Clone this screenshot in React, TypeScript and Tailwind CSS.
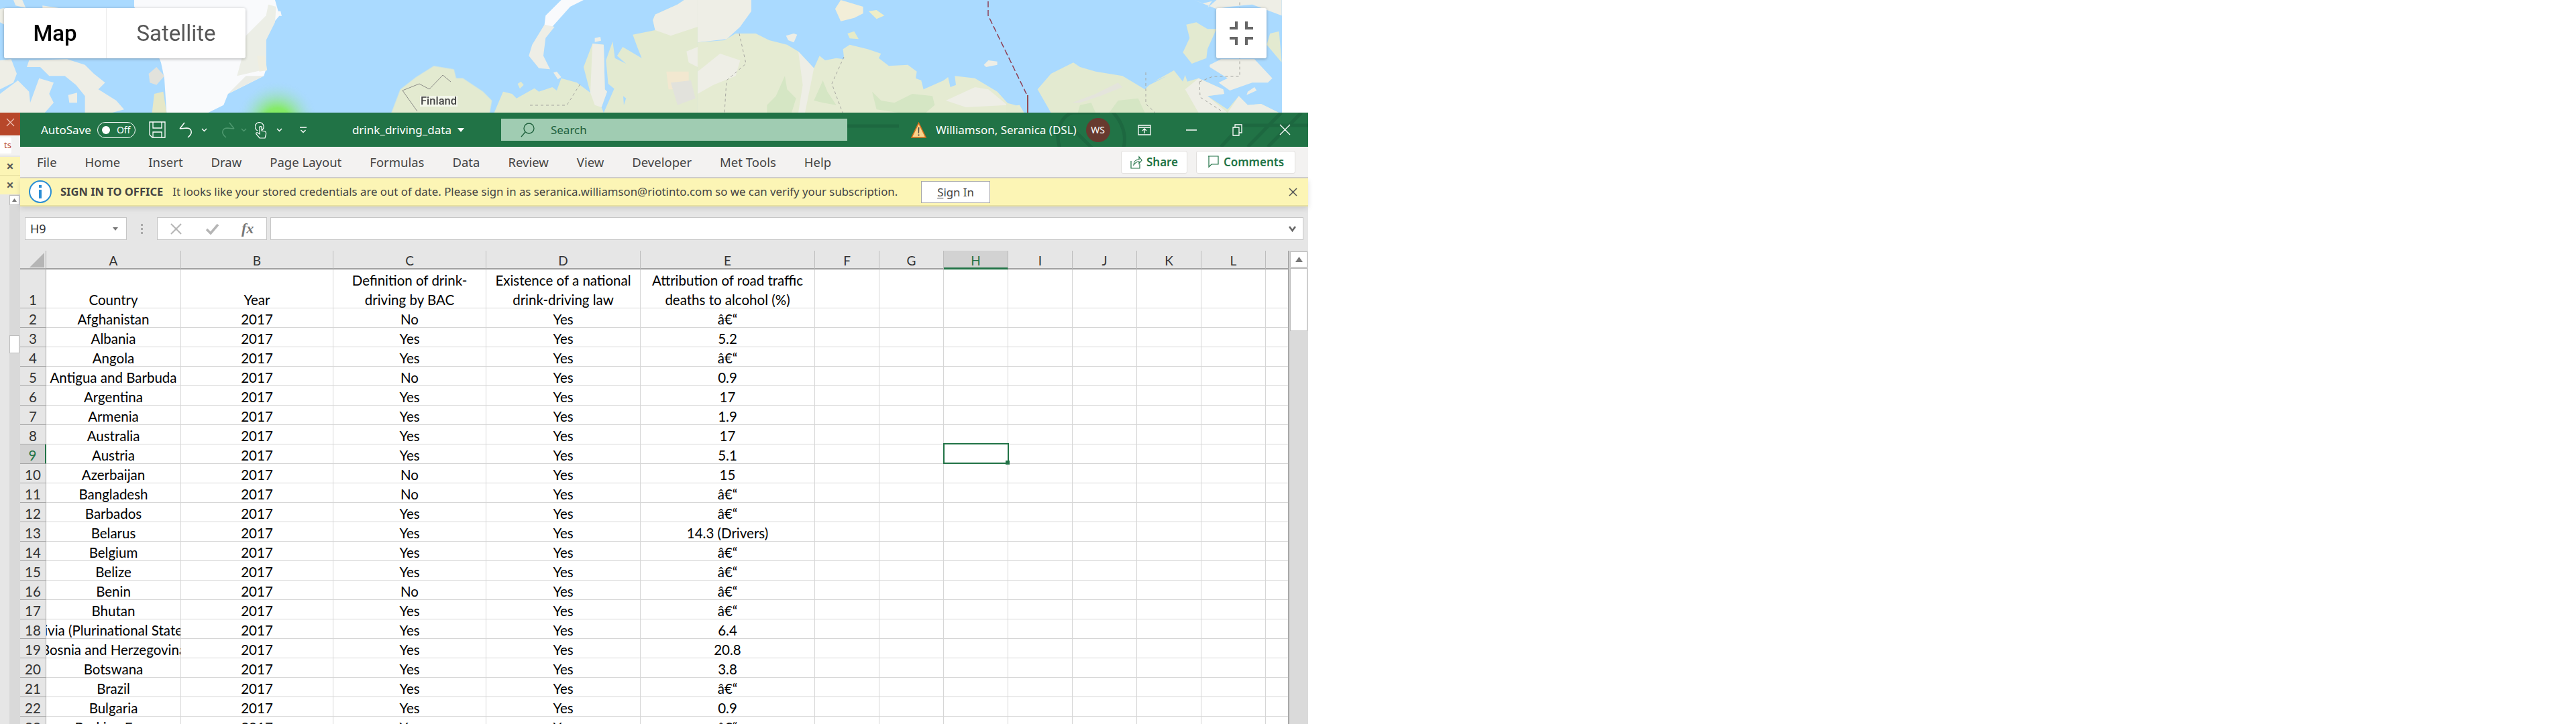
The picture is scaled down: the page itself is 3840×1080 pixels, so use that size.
import type { ReactNode } from "react";

const UI = "[font-family:'Noto_Sans',sans-serif]";
const CELL = "[font-family:Lato,sans-serif]";

const DASH = "â\u20ac\u201c";
const COLS = ["A", "B", "C", "D", "E", "F", "G", "H", "I", "J", "K", "L"];
const GRID = "grid grid-cols-[39px_201px_227px_228px_230px_260px_96px_96px_96px_96px_96px_96px_96px_34px]";

const ROWS: [string, string, string][] = [
  ["Afghanistan", "No", DASH],
  ["Albania", "Yes", "5.2"],
  ["Angola", "Yes", DASH],
  ["Antigua and Barbuda", "No", "0.9"],
  ["Argentina", "Yes", "17"],
  ["Armenia", "Yes", "1.9"],
  ["Australia", "Yes", "17"],
  ["Austria", "Yes", "5.1"],
  ["Azerbaijan", "No", "15"],
  ["Bangladesh", "No", DASH],
  ["Barbados", "Yes", DASH],
  ["Belarus", "Yes", "14.3 (Drivers)"],
  ["Belgium", "Yes", DASH],
  ["Belize", "Yes", DASH],
  ["Benin", "No", DASH],
  ["Bhutan", "Yes", DASH],
  ["Bolivia (Plurinational State of)", "Yes", "6.4"],
  ["Bosnia and Herzegovina", "Yes", "20.8"],
  ["Botswana", "Yes", "3.8"],
  ["Brazil", "Yes", DASH],
  ["Bulgaria", "Yes", "0.9"],
  ["Burkina Faso", "Yes", DASH],
];

const TABS = ["File", "Home", "Insert", "Draw", "Page Layout", "Formulas", "Data", "Review", "View", "Developer", "Met Tools", "Help"];

// map shapes, in the coordinates of 3x crops: [offset x, fill, points]
const LAND: [number, string, string][] = [
  [0, "#f9fafc", "600,0 1230,0 1250,70 1200,130 1190,180 1190,310 1180,340 1020,420 1000,470 930,505 745,505 735,350 720,280 640,90 600,30"],
  [0, "#eceee6", "1100,160 1190,70 1200,20 1235,30 1230,100 1190,180 1190,310 1060,340 1090,230"],
  [0, "#f0eee0", "1150,250 1185,250 1195,315 1160,320"],
  [0, "#eaece6", "1020,420 1100,380 1180,340 1100,340 1040,400"],
  [0, "#eeeee6", "0,270 50,265 75,330 60,370 0,400"],
  [0, "#eeeee6", "60,0 100,0 115,35 70,25"],
  [0, "#eeeee6", "0,40 20,35 20,110 0,100"],
  [0, "#eeeee6", "190,25 260,35 240,60 190,50"],
  [0, "#eeeee6", "130,270 300,265 380,290 420,330 470,370 440,400 520,450 555,490 500,505 380,505 380,430 340,380 290,340 220,340 180,300 120,300"],
  [0, "#eeeee6", "0,420 80,360 130,410 135,460 175,350 240,370 220,420 240,460 200,505 0,505"],
  [0, "#eeeee6", "305,425 345,415 345,460 310,460"],
  [0, "#e2e2dc", "665,330 700,300 735,340 700,380 670,370"],
  [0, "#e6e8c8", "690,420 730,410 745,505 680,505"],
  [0, "#f8f8f8", "1240,50 1255,50 1260,72 1240,70"],

  [520, "#e3ead0", "190,505 230,400 300,345 380,295 470,310 480,350 510,350 600,410 640,450 630,505"],
  [520, "#f9fafc", "1050,0 950,0 880,70 875,110 905,125 990,30"],
  [520, "#eeeee6", "875,110 820,200 805,250 850,305 900,310 870,250 880,170 920,120"],
  [520, "#eeeee6", "915,325 930,320 950,345 935,355"],
  [520, "#e3ead0", "755,375 770,365 782,380 765,397"],
  [520, "#eeeee6", "1100,170 1125,165 1128,182 1100,188"],
  [520, "#e3ead0", "650,505 690,410 730,420 750,440 830,395 850,410 910,390 930,405 950,350 1020,370 1080,415 1050,300 1090,195 1140,200 1145,400 1155,410 1130,480 1140,505"],
  [520, "#eeeee6", "1080,415 1090,195 1140,200 1145,400 1155,410 1130,480 1100,470"],
  [520, "#e3ead0", "1140,505 1190,390 1225,400 1230,470 1240,440 1160,375 1150,270 1180,185 1190,260 1240,285 1200,250 1225,210 1310,260 1290,210 1270,155 1370,135 1360,90 1370,65 1470,20 1500,0 1560,0 1560,505"],
  [520, "#eeeee6", "1370,135 1360,90 1370,65 1470,20 1500,0 1560,0 1560,120 1440,160"],
  [520, "#f2e8d0", "1420,320 1520,320 1520,400 1430,400"],
  [520, "#e2e2dc", "1440,370 1530,360 1550,440 1470,470"],
  [520, "#eeeee6", "1510,230 1560,210 1560,300 1520,280"],

  [1040, "#eeeee6", "0,0 240,0 240,50 190,120 130,175 0,190"],
  [1040, "#e5ebd2", "120,180 170,150 230,150 260,150 320,180 400,200 450,230 520,305 545,250 570,270 620,260 655,265 650,220 680,200 760,220 820,240 810,260 855,295 940,290 980,320 975,350 1000,360 1010,400 1100,360 1120,345 1130,390 1155,380 1150,340 1240,350 1340,410 1385,460 1395,475 1440,470 1460,505 0,505 0,190"],
  [1040, "#eeeee6", "0,320 100,240 190,270 170,340 70,380 0,420"],
  [1040, "#eeeee6", "450,230 520,305 480,505 450,505 470,380"],
  [1040, "#eeeee6", "1110,450 1240,390 1300,400 1385,470 1200,480"],
  [1040, "#f2eed8", "615,40 640,0 740,30 740,60 700,80 640,95"],
  [1040, "#eeeec8", "765,50 800,45 835,70 800,85"],
  [1040, "#e6ebc8", "670,150 700,140 720,175 680,172"],
  [1040, "#eeeee6", "395,160 430,150 445,155 430,190 405,180"],
  [1040, "#eeeee6", "1280,290 1300,270 1340,275 1340,290 1290,300"],
  [1040, "#d5e6c4", "390,340 400,400 440,440 420,505 310,505 310,470 350,430"],
  [1040, "#d5e6c4", "560,360 580,410 620,470 560,460 520,450"],
  [1040, "#d5e6c4", "780,410 820,450 880,460 960,420 1050,430 1060,470 1020,505 900,505 800,490"],

  [1500, "#e3ead0", "0,460 40,470 80,505 0,505"],
  [1500, "#e3ead0", "140,400 200,330 300,280 330,300 400,320 520,340 620,400 640,380 720,340 660,365 750,315 790,365 800,335 810,365 860,350 970,400 975,420 900,430 990,490 1040,430 1080,470 1140,465 1220,505 200,505"],
  [1500, "#eeeee6", "860,350 970,400 975,420 900,430 990,505 860,505 800,400"],
  [1500, "#eeeee6", "1040,430 1080,470 1140,465 1220,505 990,505"],
  [1500, "#e4e4dc", "295,460 400,420 500,370 520,390 420,430 330,460"],
  [1500, "#d5e6c4", "330,470 380,460 400,505 320,505"],
  [1500, "#d5e6c4", "500,450 590,440 620,505 460,505"],
  [1500, "#e3ead0", "805,110 850,100 900,130 940,130 900,220 895,260 830,285 790,235 820,170"],
  [1500, "#eeeee6", "910,290 960,265 1110,265 1190,350 1170,370 1100,370 1000,405 950,370 990,350 910,300"],
  [1500, "#eeeee6", "840,0 880,15 920,5 900,35 940,0 1232,0 1232,70 1100,20 1000,30 940,40"],
  [1500, "#e3ead0", "1180,150 1220,140 1232,280 1165,200"],
  [1500, "#eeeee6", "1080,410 1110,390 1120,405 1075,425"],
];

function MapBackground() {
  return (
    <svg width="1911" height="168" viewBox="0 0 1911 168" className="absolute inset-0">
      <defs>
        <radialGradient id="glow">
          <stop offset="0%" stopColor="#7df04f" />
          <stop offset="35%" stopColor="#86ea6a" />
          <stop offset="100%" stopColor="#a9dbf0" stopOpacity="0" />
        </radialGradient>
        <filter id="soft">
          <feGaussianBlur stdDeviation="0.5" />
        </filter>
      </defs>
      <rect width="1911" height="168" fill="#aadaff" />
      <g filter="url(#soft)">
        {LAND.map(([x, fill, pts], i) => (
          <polygon key={i} transform={`translate(${x} 0) scale(0.3333)`} points={pts} fill={fill} />
        ))}
      </g>
      <polyline points="1473,2 1473,23 1530,140" fill="none" stroke="#8f3f55" strokeWidth="1.5" strokeDasharray="9 4" />
      <line x1="1532" y1="142" x2="1532" y2="168" stroke="#8f1a1a" strokeWidth="1.5" />
      <g fill="none" stroke="#a5a5a0" strokeWidth="1" strokeDasharray="4 4">
        <polyline points="1102,50 1112,95 1083,120 1080,168" />
        <polyline points="1708,108 1708,155 1722,168" />
        <polyline points="1788,122 1808,114 1848,114 1848,0" />
        <polyline points="1788,122 1789,145 1820,165" />
        <polyline points="1258,85 1240,125 1256,168" />
        <polyline points="790,157 845,157 865,125" />
      </g>
      <polyline
        points="622,166 600,135 625,125 640,133 660,112 672,122"
        fill="none"
        stroke="#8a8a86"
        strokeWidth="1"
      />
      <circle cx="413" cy="182" r="60" fill="url(#glow)" />
    </svg>
  );
}

function MapControls() {
  return (
    <div className="relative flex h-[168px] w-[1911px] items-start justify-between overflow-hidden pt-3 pr-[23px] pl-[6px]">
      <MapBackground />
      <div className="relative flex h-[75px] rounded-[3px] bg-white text-[33px] shadow-[0_1px_4px_rgba(0,0,0,0.3)] [font-family:Roboto,sans-serif]">
        <div className="flex w-[152px] items-center justify-center font-medium text-black">Map</div>
        <div className="flex w-[208px] items-center justify-center border-l border-[#ececec] text-[#565656]">Satellite</div>
      </div>
      <span className="absolute top-[143px] left-[626px] bg-white/60 px-px text-[16.5px] leading-[16px] font-medium text-[#444] [font-family:Roboto,sans-serif]">
        Finland
      </span>
      <button className="relative flex h-[75px] w-[75px] items-center justify-center rounded-[3px] bg-white shadow-[0_1px_4px_rgba(0,0,0,0.3)]">
        <svg width="35" height="35" viewBox="0 0 35 35" fill="none" stroke="#666" strokeWidth="4">
          <path d="M0 10h10V0M25 0v10h10M35 25H25v10M10 35V25H0" />
        </svg>
      </button>
    </div>
  );
}

function Chevron({ dim }: { dim?: boolean }) {
  return (
    <svg width="9" height="6" viewBox="0 0 9 6" fill="none" stroke={dim ? "#4f9a70" : "#fff"} strokeWidth="1.4">
      <path d="M1 1l3.5 3.5L8 1" />
    </svg>
  );
}

function QuickAccess() {
  return (
    <div className="flex items-center">
      <svg width="25" height="25" viewBox="0 0 25 25" fill="none" stroke="#fff" strokeWidth="1.3" className="ml-5">
        <path d="M1 1h23v23H5l-4-4zM6 1v9h13V1M6 24v-8h13v8" />
      </svg>
      <svg width="24" height="25" viewBox="0 0 24 25" fill="none" stroke="#fff" strokeWidth="1.5" className="ml-5">
        <path d="M1 11L8 2M1 11l10-1c7 0 11 7 2 14" />
      </svg>
      <div className="mr-[17px] ml-[9px]"><Chevron /></div>
      <svg width="24" height="25" viewBox="0 0 24 25" fill="none" stroke="#4f9a70" strokeWidth="1.5">
        <path d="M23 11L16 2M23 11l-10-1C6 10 2 17 11 24" />
      </svg>
      <div className="mr-3 ml-[9px]"><Chevron dim /></div>
      <svg width="18" height="26" viewBox="0 0 18 26" fill="none" stroke="#fff" strokeWidth="1.2">
        <path d="M4 14a6.5 6.5 0 1 1 7-1M6 9a3 3 0 0 1 5 0M7 19V9c0-2 3-2 3 0v5l5 1c2 1 2 3 1 6l-1 4H7l-5-6c-1-2 1-3 2-2z" />
      </svg>
      <div className="ml-[14px]"><Chevron /></div>
      <svg width="10" height="10" viewBox="0 0 10 10" fill="none" stroke="#fff" strokeWidth="1.3" className="ml-[26px]">
        <path d="M0 1h10M1.5 5l3.5 3.5L8.5 5" />
      </svg>
    </div>
  );
}

function TitleBar() {
  return (
    <div className={`relative flex h-[51px] items-center overflow-hidden bg-[#217346] pl-[31px] text-white ${UI}`}>
      <svg width="700" height="51" viewBox="0 0 700 51" fill="none" stroke="#1d6840" strokeWidth="5" className="absolute top-0 right-0">
        <path d="M0 20h90M340 75c-30-50 0-75 10-75M405-5c30 30 30 70-10 90M350 0l40 0M345 20l50 50" />
        <path d="M570 51l30-32h100M640 51l50-51M610 51l50-51" />
      </svg>
      <span className="relative text-[17px]">AutoSave</span>
      <div className="relative ml-[9px] flex h-6 w-[57px] items-center rounded-full border-[1.5px] border-white pl-[6px]">
        <span className="h-3 w-3 rounded-full bg-white" />
        <span className="ml-[10px] text-[14px]">Off</span>
      </div>
      <QuickAccess />
      <span className="relative ml-[68px] text-[17px]">drink_driving_data</span>
      <svg width="10" height="6" viewBox="0 0 10 6" className="relative ml-[9px]">
        <path d="M0 0h10L5 6z" fill="#fff" />
      </svg>
      <div className="relative ml-[55px] flex h-[33px] w-[516px] items-center bg-[#a0ccb2] pl-[29px] text-[#1d5f3b]">
        <svg width="21" height="22" viewBox="0 0 21 22" fill="none" stroke="#1d5f3b" strokeWidth="1.3">
          <circle cx="12.5" cy="8.5" r="7.5" />
          <path d="M7 14L1 21" />
        </svg>
        <span className="ml-6 text-[17px]">Search</span>
      </div>
      <svg width="23" height="24" viewBox="0 0 23 24" className="relative ml-[95px]">
        <path d="M11.5 1.5L22 23H1z" fill="#fbd38a" stroke="#d9701e" strokeWidth="1.6" />
        <path d="M10.6 8h1.8l-.3 9h-1.2zM10.6 18.5h1.8v2h-1.8z" fill="#444" />
      </svg>
      <span className="relative ml-[14px] text-[17px] whitespace-nowrap">Williamson, Seranica (DSL)</span>
      <div className="relative ml-[14px] flex h-9 w-9 items-center justify-center rounded-full bg-[#673a2f] text-[14px]">WS</div>
      <svg width="20" height="16" viewBox="0 0 20 16" fill="none" stroke="#fff" strokeWidth="1.3" className="relative ml-[41px]">
        <path d="M1 1h18v14H1zM1 4h18M10 13V6M7 9l3-3 3 3" />
      </svg>
      <svg width="16" height="2" viewBox="0 0 16 2" className="relative ml-[52px]">
        <path d="M0 1h16" stroke="#fff" strokeWidth="1.5" />
      </svg>
      <svg width="15" height="18" viewBox="0 0 15 18" fill="none" stroke="#fff" strokeWidth="1.3" className="relative ml-[53px]">
        <path d="M1 5h9v12H1zM4 5V1h10v12h-4" />
      </svg>
      <svg width="17" height="17" viewBox="0 0 17 17" fill="none" stroke="#fff" strokeWidth="1.4" className="relative ml-[55px]">
        <path d="M1 1l15 15M16 1L1 16" />
      </svg>
    </div>
  );
}

function RibbonTabs() {
  return (
    <div className={`flex h-[47px] items-center justify-between border-b-2 border-[#d2d0ce] bg-[#f3f2f1] pr-[19px] pl-[4px] text-[#444] ${UI}`}>
      <div className="flex text-[18.5px]">
        {TABS.map((tab) => (
          <span key={tab} className="px-[21px] whitespace-nowrap">{tab}</span>
        ))}
      </div>
      <div className="flex gap-[13px] text-[17px] font-semibold text-[#217346]">
        <button className="flex h-[34px] w-[99px] items-center justify-center gap-[6px] rounded-[3px] border border-[#e1dfdd] bg-white">
          <svg width="18" height="20" viewBox="0 0 18 20" fill="none" stroke="#217346" strokeWidth="1.2">
            <path d="M1 8v11h13v-6M5 14c0-5 3-8 8-8V2l4 5-4 5V9c-4 0-6 2-8 5z" />
          </svg>
          Share
        </button>
        <button className="flex h-[34px] w-[148px] items-center justify-center gap-[7px] rounded-[3px] border border-[#e1dfdd] bg-white">
          <svg width="17" height="19" viewBox="0 0 17 19" fill="none" stroke="#217346" strokeWidth="1.2">
            <path d="M1 1h15v12H6l-4 4V1" />
          </svg>
          Comments
        </button>
      </div>
    </div>
  );
}

function SignInBar() {
  return (
    <div className={`relative flex h-[42px] items-center border-b-2 border-[#e6dfa0] bg-[#fcf5b5] pl-[13px] text-[16.8px] text-[#444] shadow-[0_3px_8px_rgba(0,0,0,0.12)] ${UI}`}>
      <div className="flex h-[34px] w-[34px] items-center justify-center rounded-full border-2 border-[#2a8dd4] bg-white">
        <svg width="6" height="20" viewBox="0 0 6 20">
          <path d="M1 0h4v4H1zM1 7h4v13H1z" fill="#2a8dd4" />
        </svg>
      </div>
      <span className="ml-[13px] text-[16.5px] font-bold whitespace-nowrap">SIGN IN TO OFFICE</span>
      <span className="ml-[14px] whitespace-nowrap">
        It looks like your stored credentials are out of date. Please sign in as seranica.williamson@riotinto.com so we can verify your subscription.
      </span>
      <button className="absolute top-1 left-[1343px] h-[33px] w-[103px] border border-[#a8a8a8] bg-white">
        <span className="underline decoration-1 underline-offset-2">S</span>ign In
      </button>
      <svg width="13" height="13" viewBox="0 0 13 13" fill="none" stroke="#555" strokeWidth="1.6" className="absolute top-[14px] left-[1891px]">
        <path d="M1 1l11 11M12 1L1 12" />
      </svg>
    </div>
  );
}

function FormulaBar() {
  return (
    <div className={`flex h-[66px] items-start gap-[5px] bg-[#e6e6e6] pt-4 pr-[7px] pl-[7px] ${UI}`}>
      <div className="flex h-[34px] w-[152px] items-center justify-between border border-[#c6c6c6] bg-white pr-3 pl-[7px] text-[18px] text-[#333]">
        H9
        <svg width="8" height="5" viewBox="0 0 8 5"><path d="M0 0h8L4 5z" fill="#777" /></svg>
      </div>
      <div className="flex h-[34px] w-[35px] flex-col items-center justify-center gap-[3px]">
        <span className="h-[3px] w-[3px] bg-[#aaa]" />
        <span className="h-[3px] w-[3px] bg-[#aaa]" />
        <span className="h-[3px] w-[3px] bg-[#aaa]" />
      </div>
      <div className="flex h-[34px] w-[164px] items-center border border-[#c6c6c6] bg-white pl-[19px]">
        <svg width="17" height="17" viewBox="0 0 17 17" fill="none" stroke="#b5b5b5" strokeWidth="2">
          <path d="M1 1l15 15M16 1L1 16" />
        </svg>
        <svg width="20" height="17" viewBox="0 0 20 17" fill="none" stroke="#b5b5b5" strokeWidth="3.5" className="ml-[36px]">
          <path d="M1 9l6 6L18 2" />
        </svg>
        <span className="ml-[33px] text-[22px] leading-none font-bold text-[#777] italic [font-family:'Liberation_Serif',serif]">fx</span>
      </div>
      <div className="flex h-[34px] flex-1 items-center justify-end border border-[#c6c6c6] bg-white pr-[10px]">
        <svg width="11" height="11" viewBox="0 0 11 11" fill="none" stroke="#666" strokeWidth="2.6">
          <path d="M1 2l4.5 6L10 2" />
        </svg>
      </div>
    </div>
  );
}

function Cell({ children }: { children?: ReactNode }) {
  return (
    <div className="flex items-center justify-center overflow-hidden border-r border-b border-[#d6d6d6] pt-[4px] leading-[24px] whitespace-nowrap">
      {children}
    </div>
  );
}

function HeadCell({ children }: { children: ReactNode }) {
  return (
    <div className="flex items-end justify-center border-r border-b border-[#d6d6d6]">
      <div className="-mb-[3px]">{children}</div>
    </div>
  );
}

function Sheet() {
  return (
    <div className="relative h-[706px] overflow-hidden bg-white">
      <div className={`flex flex-col ${CELL} text-[20.5px] text-black`}>
        <div className={`${GRID} grid-rows-[28px] bg-[#e6e6e6] text-[19px] leading-[22px] text-[#333]`}>
          <div className="relative border-r border-b-2 border-[#a8a8a8]">
            <svg width="22" height="22" viewBox="0 0 22 22" className="absolute right-[2px] bottom-[1px]">
              <path d="M22 0v22H0z" fill="#b5b5b5" />
            </svg>
          </div>
          {COLS.map((c) => (
            <div
              key={c}
              className={
                c === "H"
                  ? "flex items-center justify-center border-r border-b-[3px] border-r-[#b5b5b5] border-b-[#217346] bg-[#d2d2d2] pt-[4px] text-[#217346]"
                  : "flex items-center justify-center border-r border-b-2 border-r-[#bdbdbd] border-b-[#a0a0a0] pt-[4px]"
              }
            >
              {c}
            </div>
          ))}
          <div className="border-b-2 border-[#a0a0a0]" />
        </div>

        <div className={`${GRID} grid-rows-[58px] text-center leading-[29px]`}>
          <div className="flex items-end justify-center border-r border-b border-[#a8a8a8] bg-[#e6e6e6] text-[#333]">
            <div className="-mb-[3px]">1</div>
          </div>
          <HeadCell>Country</HeadCell>
          <HeadCell>Year</HeadCell>
          <HeadCell>Definition of drink-<br />driving by BAC</HeadCell>
          <HeadCell>Existence of a national<br />drink-driving law</HeadCell>
          <HeadCell>Attribution of road traffic<br />deaths to alcohol (%)</HeadCell>
          {Array.from({ length: 8 }).map((_, i) => (
            <div key={i} className="border-r border-b border-[#d6d6d6]" />
          ))}
        </div>

        {ROWS.map(([country, bac, pct], i) => {
          const row = i + 2;
          return (
            <div key={country} className={`${GRID} grid-rows-[29px]`}>
              <div
                className={
                  row === 9
                    ? "flex items-center justify-center border-r-2 border-b border-r-[#217346] border-b-[#a8a8a8] bg-[#d2d2d2] pt-[4px] leading-[24px] text-[#217346]"
                    : "flex items-center justify-center border-r border-b border-[#a8a8a8] bg-[#e6e6e6] pt-[4px] leading-[24px] text-[#333]"
                }
              >
                {row}
              </div>
              <Cell>{country}</Cell>
              <Cell>2017</Cell>
              <Cell>{bac}</Cell>
              <Cell>Yes</Cell>
              <Cell>{pct}</Cell>
              {COLS.slice(5).map((c) => (
                <div key={c} className="relative border-r border-b border-[#d6d6d6]">
                  {c === "H" && row === 9 && (
                    <span className="absolute top-[-2px] right-[-2px] bottom-[-1px] left-[-1px] z-10 border-2 border-[#217346]">
                      <span className="absolute right-[-3px] bottom-[-3px] h-[6px] w-[6px] bg-[#217346]" />
                    </span>
                  )}
                </div>
              ))}
              <div className="border-b border-[#d6d6d6]" />
            </div>
          );
        })}
      </div>
      <div className="absolute top-0 right-0 flex h-full w-[30px] flex-col items-center border-l-2 border-[#a8a8a8] bg-[#dadada]">
        <button className="mt-px flex h-6 w-[26px] items-center justify-center border border-[#bdbdbd] bg-white">
          <svg width="11" height="8" viewBox="0 0 11 8"><path d="M0 8h11L5.5 0z" fill="#777" /></svg>
        </button>
        <div className="mt-px h-[94px] w-[26px] border border-[#bdbdbd] bg-white" />
      </div>
    </div>
  );
}

function LeftSliver() {
  return (
    <div className={`flex h-[912px] w-[30px] flex-col bg-[#e6e6e6] ${UI}`}>
      <div className="flex h-[34px] items-start justify-end bg-[#b7472a] pt-2 pr-[8px]">
        <svg width="14" height="14" viewBox="0 0 14 14" fill="none" stroke="#f2c9bd" strokeWidth="1.1">
          <path d="M2 1l11 11M13 1L2 12" />
        </svg>
      </div>
      <div className="flex h-[30px] items-center bg-[#f3f2f1]">
        <div className="flex h-[24px] w-[17px] items-center justify-end rounded-r-[2px] bg-white text-[13px] text-[#b7472a]">ts</div>
      </div>
      <div className="mt-[2px] flex h-[28px] items-center justify-center border-b border-[#e6dfa0] bg-[#fcf5b5] text-[20px] leading-none font-bold text-[#555]">×</div>
      <div className="flex h-[28px] items-center justify-center bg-[#fcf5b5] text-[20px] leading-none font-bold text-[#555]">×</div>
      <div className="ml-[14px] flex flex-1 flex-col bg-[#d9d9d9]">
        <div className="mt-[1px] flex h-[15px] w-[15px] items-center justify-center border border-[#bdbdbd] bg-white">
          <svg width="7" height="5" viewBox="0 0 7 5"><path d="M0 5h7L3.5 0z" fill="#777" /></svg>
        </div>
        <div className="mt-[194px] h-[27px] w-[15px] border border-[#bdbdbd] bg-white" />
      </div>
    </div>
  );
}

export default function App() {
  return (
    <div className="h-[1080px] w-[3840px] overflow-hidden bg-white">
      <MapControls />
      <div className="flex w-[1950px]">
        <LeftSliver />
        <div className="flex w-[1920px] flex-col">
          <TitleBar />
          <RibbonTabs />
          <SignInBar />
          <FormulaBar />
          <Sheet />
        </div>
      </div>
    </div>
  );
}
